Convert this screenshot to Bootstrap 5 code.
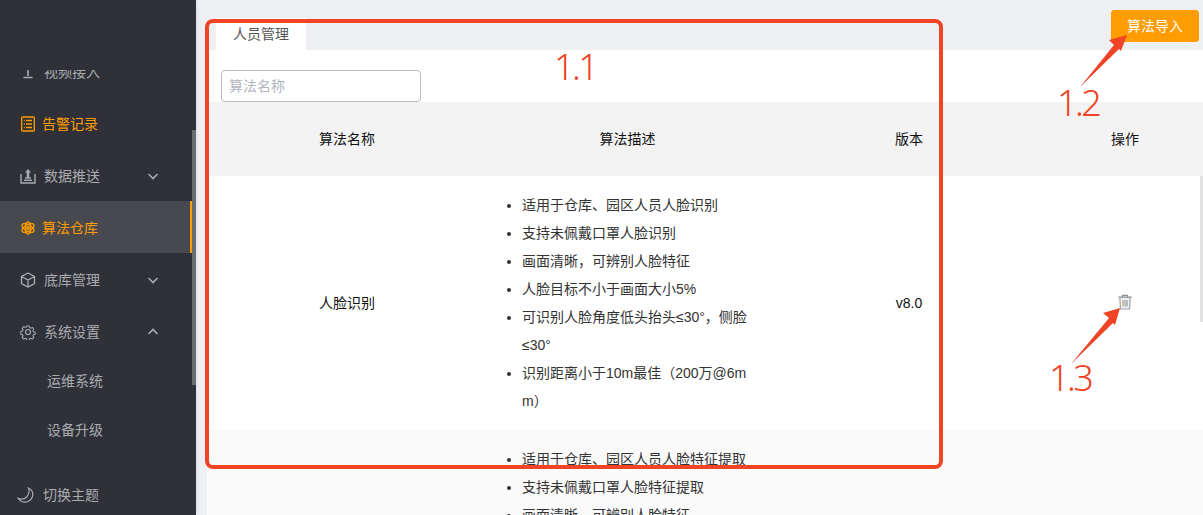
<!doctype html>
<html lang="zh-CN">
<head>
<meta charset="utf-8">
<title>算法仓库</title>
<link rel="stylesheet" href="https://cdn.jsdelivr.net/npm/bootstrap@5.3.0/dist/css/bootstrap.min.css">
<style>
html,body{height:515px;overflow:hidden}
body{background:#eff0f4;font:14px/1.5 "Liberation Sans","Noto Sans CJK SC",sans-serif;color:#333}
.shell{width:1203px;height:515px;position:relative;overflow:hidden}
.side{width:196px;height:515px;background:#2f3038;position:relative;flex:none;box-shadow:1px 0 3px rgba(0,0,0,.08)}
.side-head{height:70px;background:#2f3038;position:relative;z-index:1;flex:none}
.side-scroll{flex:1 1 auto;overflow:hidden;min-height:0}
.side-inner{margin-top:-25px}
.side-item{height:52px;padding:2px 37px 0 20px;color:#a9abb0;gap:8px}
.side-item svg.ico{width:16px;height:16px;flex:none}
.side-item.warn{color:#ff9c00;gap:6px}
.side-item.on{background:#48494e;color:#ff9c00;gap:6px;margin-right:4px;border-right:2px solid #ff9c00;padding-right:33px}
.side-sub{height:49px;padding-left:47px;color:#a9abb0}
.side-foot{height:40px;padding:0 0 0 17px;color:#a9abb0;gap:9px;flex:none}
.side-thumb{position:absolute;right:0;top:130px;width:4px;height:255px;background:#6b6c70;z-index:2}
.chev{width:12px;height:12px;margin-left:auto}
.main-col{flex:1 1 auto;min-width:0;padding-left:11px}
.top-bar{height:50px;padding:0 4px 0 9px}
.tab-one{width:90px;height:32px;background:#fff;color:#555;text-align:center;line-height:33px}
.go-btn{--bs-btn-bg:#ff9c00;--bs-btn-border-color:#ff9c00;--bs-btn-hover-bg:#ff9c00;--bs-btn-hover-border-color:#ff9c00;--bs-btn-color:#fff;--bs-btn-hover-color:#fff;--bs-btn-font-size:14px;--bs-btn-border-radius:3px;width:88px;height:32px;padding:0;margin-bottom:8px}
.panel{background:#fff;height:465px;overflow:hidden;position:relative}
.find-row{padding:20px 0 0 14px;height:52px}
.find-box{width:200px;height:32px;border:1px solid #bbb;border-radius:4px;padding:0 7px;font-size:14px;color:#333}
.find-box::placeholder{color:#b0b5c0}
.algo{table-layout:fixed;width:996px;margin:0;--bs-table-bg:transparent;color:#111}
.algo th,.algo td{text-align:center;vertical-align:middle;border:0;padding:0;font-weight:400;color:#111}
.algo thead th{height:74px;background:#f3f3f4}
.algo .zebra td{background:#fafafa}
.algo td.desc{text-align:left;padding:15px 20px 15px 35px;font-weight:400}
.desc ul{margin:0;padding:0;list-style:disc;line-height:28px;color:#333;word-break:break-all}
.op-cell{padding-right:3px!important}
.bin{display:block;margin:-2px auto 0}
.bar-thumb{position:absolute;right:0;top:126px;width:3px;height:146px;background:#e2e2e2}
.mark-layer{position:absolute;left:0;top:0;width:1203px;height:515px;pointer-events:none;z-index:5}
.mark-box{position:absolute;left:205px;top:19px;width:738px;height:450px;border:4px solid #ef4426;border-radius:8px}
.mark-num{position:absolute;color:#ef4426;font:300 36px/1 "Noto Sans","Open Sans",sans-serif;letter-spacing:-2.5px}
.n1{left:554px;top:49px}.n2{left:1057px;top:85px}.n3{left:1049px;top:360px}
</style>
</head>
<body>
<div class="shell d-flex">
  <aside class="side d-flex flex-column">
    <div class="side-head"></div>
    <div class="side-scroll">
      <div class="side-inner">
        <div class="side-item d-flex align-items-center">
          <svg class="ico" viewBox="0 0 16 16" fill="none" stroke="currentColor" stroke-width="1.6"><path d="M8 1v11M3.500 13.500h9"/></svg><span>视频接入</span>
        </div>
        <div class="side-item warn d-flex align-items-center">
          <svg class="ico" viewBox="0 0 16 16" fill="none" stroke="currentColor" stroke-width="1.3"><rect x="1.700" y="1" width="12.600" height="14" rx="1"/><path d="M6 4.500h6M6 8h6M6 11.500h6M3.800 4.500h1M3.800 8h1M3.800 11.500h1"/></svg><span>告警记录</span>
        </div>
        <div class="side-item d-flex align-items-center">
          <svg class="ico" viewBox="0 0 16 16" fill="none" stroke="currentColor" stroke-width="1.400"><path d="M1 6v9h14V6"/><path d="M4 12.300h8" /><path d="M8 10V3" stroke-width="2.500"/><path d="M5 4.500 8 1l3 3.500z" fill="currentColor" stroke="none"/><path d="M5 10h6"/></svg><span>数据推送</span>
          <svg class="chev" viewBox="0 0 12 12" fill="none" stroke="currentColor" stroke-width="1.600"><path d="M1.500 4 6 8.500 10.500 4"/></svg>
        </div>
        <div class="side-item on d-flex align-items-center">
          <svg class="ico" viewBox="0 0 16 16" fill="none" stroke="currentColor" stroke-width="1.300"><ellipse cx="8" cy="8" rx="6.800" ry="3.200" transform="rotate(30 8 8)"/><ellipse cx="8" cy="8" rx="6.800" ry="3.200" transform="rotate(-30 8 8)"/><ellipse cx="8" cy="8" rx="6" ry="2.800" transform="rotate(90 8 8)"/><circle cx="8" cy="8" r="1.300" fill="currentColor"/></svg><span>算法仓库</span>
        </div>
        <div class="side-item d-flex align-items-center">
          <svg class="ico" viewBox="0 0 16 16" fill="none" stroke="currentColor" stroke-width="1.300"><path d="M8 1 14.500 4.500v7L8 15l-6.500-3.500v-7zM1.500 4.500 8 8l6.500-3.500M8 8v7"/></svg><span>底库管理</span>
          <svg class="chev" viewBox="0 0 12 12" fill="none" stroke="currentColor" stroke-width="1.600"><path d="M1.500 4 6 8.500 10.500 4"/></svg>
        </div>
        <div class="side-item d-flex align-items-center">
          <svg class="ico" viewBox="0 0 16 16" fill="none" stroke="currentColor" stroke-width="1.200"><circle cx="8" cy="8" r="2.500"/><path d="M6.700 1h2.600l.4 2 1.500.7 1.800-1 1.800 1.900-1.100 1.700.6 1.500 2 .5v2.400l-2 .5-.6 1.500 1.100 1.700-1.800 1.900-1.800-1-1.500.7-.4 2H6.700l-.4-2-1.500-.7-1.800 1-1.800-1.900 1.100-1.700-.6-1.500-2-.5V7.300l2-.5.6-1.500-1.100-1.700 1.800-1.900 1.800 1 1.500-.7z" transform="translate(1.100 1.100) scale(.86)"/></svg><span>系统设置</span>
          <svg class="chev" viewBox="0 0 12 12" fill="none" stroke="currentColor" stroke-width="1.600"><path d="M1.500 8 6 3.500 10.500 8"/></svg>
        </div>
        <div class="side-sub d-flex align-items-center">运维系统</div>
        <div class="side-sub d-flex align-items-center">设备升级</div>
      </div>
    </div>
    <div class="side-foot d-flex align-items-center">
      <svg width="17" height="17" viewBox="0 0 17 17" fill="none" stroke="currentColor" stroke-width="1.200"><path d="M11.500 1c3.500 2 5 5.500 3.800 9-1.200 3.700-5.400 5.800-9.300 5C3.700 14.500 2 13 1 11.300c3 1.300 6.500 1 8.700-1.300C12 7.500 12.500 4 11.500 1z"/></svg>
      <span>切换主题</span>
    </div>
    <div class="side-thumb"></div>
  </aside>
  <main class="main-col d-flex flex-column">
    <div class="top-bar d-flex justify-content-between align-items-end">
      <div class="tab-one">人员管理</div>
      <button type="button" class="btn go-btn">算法导入</button>
    </div>
    <div class="panel">
      <div class="find-row"><input class="find-box d-block" type="text" placeholder="算法名称"></div>
      <table class="table algo">
        <colgroup><col style="width:280px"><col style="width:281px"><col style="width:282px"><col style="width:153px"></colgroup>
        <thead><tr><th>算法名称</th><th>算法描述</th><th>版本</th><th class="op-cell">操作</th></tr></thead>
        <tbody>
          <tr>
            <td>人脸识别</td>
            <td class="desc"><ul>
              <li>适用于仓库、园区人员人脸识别</li>
              <li>支持未佩戴口罩人脸识别</li>
              <li>画面清晰，可辨别人脸特征</li>
              <li>人脸目标不小于画面大小5%</li>
              <li>可识别人脸角度低头抬头≤30°，侧脸≤30°</li>
              <li>识别距离小于10m最佳（200万@6mm）</li>
            </ul></td>
            <td>v8.0</td>
            <td class="op-cell">
              <svg class="bin" width="16" height="16" viewBox="0 0 16 16" fill="none" aria-label="删除"><path d="M1 3h14M5.500 3V1.300h5V3" stroke="#8f9499" stroke-width="1.200"/><path d="M2.800 3.500 3.500 15h9l.7-11.500z" fill="#eef0f1" stroke="#a0a5aa" stroke-width="1.200"/><path d="M6 6v6.500" stroke="#d9a05a" stroke-width="1.200"/><path d="M8 6v6.500" stroke="#8ba9c8" stroke-width="1.200"/><path d="M10 6v6.500" stroke="#9a9a9a" stroke-width="1.200"/></svg>
            </td>
          </tr>
          <tr class="zebra">
            <td>人脸特征提取</td>
            <td class="desc"><ul>
              <li>适用于仓库、园区人员人脸特征提取</li>
              <li>支持未佩戴口罩人脸特征提取</li>
              <li>画面清晰，可辨别人脸特征</li>
              <li>人脸目标不小于画面大小5%</li>
              <li>可识别人脸角度低头抬头≤30°，侧脸≤30°</li>
              <li>识别距离小于10m最佳（200万@6mm）</li>
            </ul></td>
            <td>v8.0</td>
            <td class="op-cell"></td>
          </tr>
        </tbody>
      </table>
      <div class="bar-thumb"></div>
    </div>
  </main>
  <div class="mark-layer">
    <div class="mark-box"></div>
    <span class="mark-num n1">1.1</span>
    <span class="mark-num n2">1.2</span>
    <span class="mark-num n3">1.3</span>
    <svg width="1203" height="515" viewBox="0 0 1203 515" class="position-absolute top-0 start-0">
      <path d="M1080 87 1114 45 1109 40 1127 35 1121 51 1119 49z" fill="#ef4426"/>
      <path d="M1071 364 1109 318 1103 313 1120 308 1115 325 1113 323z" fill="#ef4426"/>
    </svg>
  </div>
</div>
</body>
</html>
